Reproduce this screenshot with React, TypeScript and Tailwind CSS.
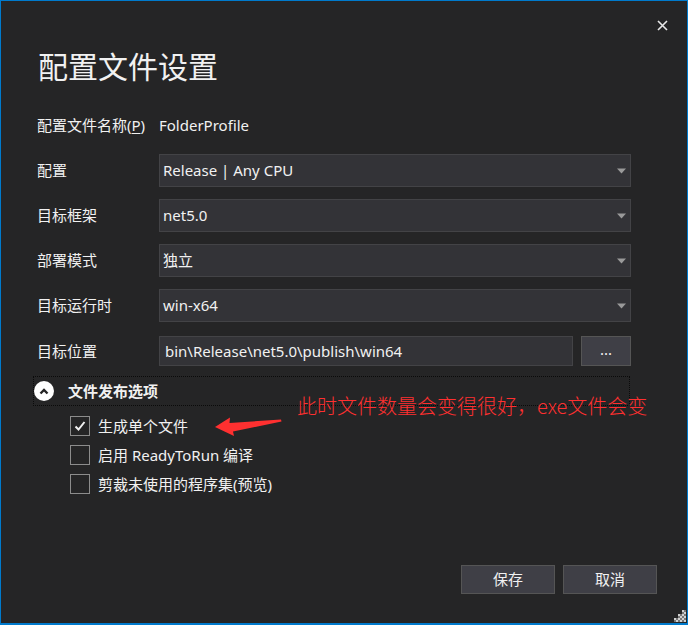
const FONT = "font-['Segoe_UI','Noto_Sans','Noto_Sans_CJK_SC',sans-serif]";

function Caret() {
  return (
    <svg width="9" height="6" viewBox="0 0 9 6" className="mt-[2px] shrink-0">
      <polygon points="0,0.5 9,0.5 4.5,5.5" fill="#9a9a9a" />
    </svg>
  );
}

function Select({ value }: { value: string }) {
  return (
    <div className="flex h-[33px] w-[472px] items-center justify-between border border-[#434346] bg-[#333337] pb-[2px] pl-[3px] pr-[4px]">
      <span>{value}</span>
      <Caret />
    </div>
  );
}

function Row({ label, children }: { label: React.ReactNode; children: React.ReactNode }) {
  return (
    <div className="flex h-[33px] items-center">
      <div className="w-[122px] shrink-0 pb-[2px]">{label}</div>
      {children}
    </div>
  );
}

function Check({ checked, label }: { checked?: boolean; label: string }) {
  return (
    <div className="flex h-[20px] items-center gap-[8px]">
      <div className="flex h-[20px] w-[20px] items-center justify-center border border-[#8c8c8c]">
        {checked && (
          <svg width="14" height="14" viewBox="0 0 14 14">
            <polyline points="2.5,7.5 5.5,10.5 11.5,3" fill="none" stroke="#f1f1f1" strokeWidth="2" />
          </svg>
        )}
      </div>
      <span className="pb-[1px]">{label}</span>
    </div>
  );
}

export default function App() {
  return (
    <div
      className={`relative flex h-[625px] w-[688px] flex-col border border-b-2 border-[#007acc] bg-[#252526] text-[15px] leading-[20px] text-[#f1f1f1] ${FONT}`}
    >
      {/* Close */}
      <div className="flex justify-end pr-[19px] pt-[19px]">
        <svg width="11" height="11" viewBox="0 0 11 11">
          <path d="M1 1 L10 10 M10 1 L1 10" stroke="#e8e8e8" strokeWidth="1.6" />
        </svg>
      </div>

      <h1 className="ml-[37px] mt-[21px] text-[30px] font-normal leading-[30px] text-[#f1f1f1]">配置文件设置</h1>

      {/* Form */}
      <div className="ml-[36px] mt-[27px] flex flex-col gap-[12px]">
        <Row
          label={
            <>
              配置文件名称(<span className="underline underline-offset-2">P</span>)
            </>
          }
        >
          <span className="pb-[2px]">FolderProfile</span>
        </Row>
        <Row label="配置">
          <Select value="Release | Any CPU" />
        </Row>
        <Row label="目标框架">
          <Select value="net5.0" />
        </Row>
        <Row label="部署模式">
          <Select value="独立" />
        </Row>
        <Row label="目标运行时">
          <Select value="win-x64" />
        </Row>
        <div className="mt-[2px] flex h-[30px] items-center">
          <div className="w-[122px] shrink-0 pb-[1px]">目标位置</div>
          <div className="flex h-[30px] w-[414px] items-center border border-[#434346] bg-[#333337] pb-[1px] pl-[5px]">
            bin\Release\net5.0\publish\win64
          </div>
          <div className="ml-[8px] flex h-[30px] w-[50px] items-center justify-center border border-[#555555] bg-[#3f3f46] pb-[4px]">
            ...
          </div>
        </div>
      </div>

      {/* Section header */}
      <div className="ml-[32px] mt-[10px] flex h-[30px] w-[597px] items-center gap-[14px] border border-dotted border-[#0a0a0a]">
        <div className="flex h-[20px] w-[20px] items-center justify-center rounded-full bg-white">
          <svg width="10" height="7" viewBox="0 0 10 7">
            <polyline points="1.5,5.5 5,2 8.5,5.5" fill="none" stroke="#252526" strokeWidth="2.4" />
          </svg>
        </div>
        <span className="pb-[1px] font-bold">文件发布选项</span>
      </div>

      <div className="ml-[69px] mt-[10px] flex flex-col gap-[9px]">
        <Check checked label="生成单个文件" />
        <Check label="启用 ReadyToRun 编译" />
        <Check label="剪裁未使用的程序集(预览)" />
      </div>

      {/* Buttons */}
      <div className="mt-auto flex justify-end gap-[8px] pb-[29px] pr-[30px]">
        <button className="h-[29px] w-[94px] border border-[#555555] bg-[#3f3f46] pb-[1px] text-[#f1f1f1]">保存</button>
        <button className="h-[29px] w-[94px] border border-[#555555] bg-[#3f3f46] pb-[1px] text-[#f1f1f1]">取消</button>
      </div>

      {/* Annotation */}
      <div className="absolute left-[296px] top-[395px] text-[20px] font-light leading-[20px] text-[#ff3030] font-['Noto_Sans_CJK_SC',sans-serif]">
        此时文件数量会变得很好，exe文件会变
      </div>
      <svg className="absolute left-0 top-0" width="688" height="625" viewBox="0 0 688 625" pointerEvents="none">
        <polygon
          points="214,426 229,416.5 228.5,422 280,418.5 280.5,420.5 232,430.5 233,435"
          fill="#ff3030"
        />
      </svg>

      {/* Resize grip */}
      <svg className="absolute bottom-[1px] right-[1px]" width="12" height="12" viewBox="0 0 12 12">
        {[
          [8, 0],
          [8, 4],
          [4, 4],
          [8, 8],
          [4, 8],
          [0, 8],
        ].map(([x, y]) => (
          <g key={`${x}-${y}`}>
            <rect x={x} y={y} width="2" height="2" fill="#d0d0d0" />
            <rect x={x + 2} y={y + 2} width="2" height="2" fill="#d0d0d0" />
            <rect x={x + 2} y={y} width="2" height="2" fill="#777" />
            <rect x={x} y={y + 2} width="2" height="2" fill="#777" />
          </g>
        ))}
      </svg>
    </div>
  );
}
